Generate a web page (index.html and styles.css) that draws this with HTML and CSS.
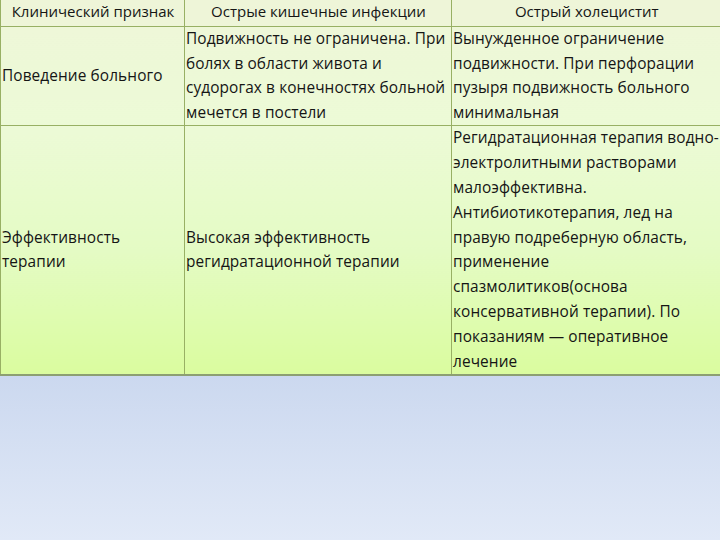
FILE: index.html
```html
<!DOCTYPE html>
<html lang="ru">
<head>
<meta charset="utf-8">
<link rel="stylesheet" href="styles.css">
</head>
<body>
<div class="slide">
  <table class="grid">
    <colgroup>
      <col class="c1"><col class="c2"><col class="c3">
    </colgroup>
    <tr class="head">
      <th>Клинический признак</th>
      <th>Острые кишечные инфекции</th>
      <th>Острый холецистит</th>
    </tr>
    <tr class="row1">
      <td class="mid">Поведение больного</td>
      <td>Подвижность не ограничена. При<br>болях в области живота и<br>судорогах в конечностях больной<br>мечется в постели</td>
      <td>Вынужденное ограничение<br>подвижности. При перфорации<br>пузыря подвижность больного<br>минимальная</td>
    </tr>
    <tr class="row2">
      <td class="mid">Эффективность<br>терапии</td>
      <td class="mid">Высокая эффективность<br>регидратационной терапии</td>
      <td>Регидратационная терапия водно-<br>электролитными растворами<br>малоэффективна.<br>Антибиотикотерапия, лед на<br>правую подреберную область,<br>применение<br>спазмолитиков(основа<br>консервативной терапии). По<br>показаниям — оперативное<br>лечение</td>
    </tr>
  </table>
</div>
</body>
</html>
```

FILE: styles.css
```css
html, body {
  margin: 0;
  padding: 0;
}
body {
  width: 720px;
  height: 540px;
  overflow: hidden;
  background: linear-gradient(to bottom, #c9d7ee 0px, #cbd8ef 373px, #e1e9f7 540px);
  font-family: "Open Sans", "Liberation Sans", sans-serif;
  color: #151515;
}
.slide {
  width: 720px;
}
.grid {
  width: 720px;
  border-collapse: collapse;
  table-layout: fixed;
  background: linear-gradient(to bottom, #eef6d8 0px, #ecfad6 130px, #e4fbc4 250px, #dafc9f 373px);
  font-size: 15.4px;
  line-height: 24.6px;
  white-space: nowrap;
  letter-spacing: 0.1px;
}
.c1 { width: 184px; }
.c2 { width: 267px; }
.c3 { width: 269px; }
.grid th, .grid td {
  padding: 0 0 0 1px;
  border: 1px solid #98b064;
  vertical-align: top;
  text-align: left;
  font-weight: normal;
  overflow: hidden;
}
.grid tr:first-child th { border-top: none; }
.grid th:last-child, .grid td:last-child { border-right: none; }
.grid tr:last-child td { border-bottom: 2px solid #8c9f72; }
.row2 td { line-height: 24.8px; }
.head th {
  text-align: center;
  height: 26px;
  line-height: 23px;
  font-size: 15px;
  letter-spacing: 0;
  background: #eef5d8;
}
.mid { vertical-align: middle !important; }
```
